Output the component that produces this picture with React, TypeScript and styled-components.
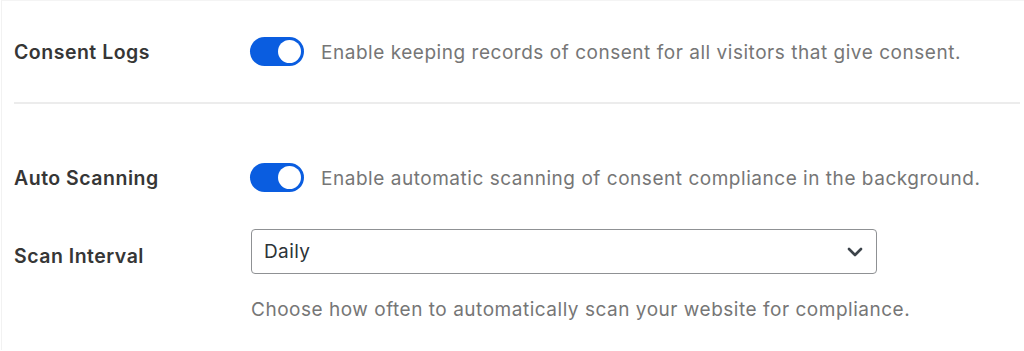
import React from "react";
import styled, { createGlobalStyle } from "styled-components";

const GlobalStyle = createGlobalStyle`
  html, body {
    margin: 0;
    padding: 0;
    background: #ffffff;
  }
  body {
    font-family: Inter, "Noto Sans", "Liberation Sans", sans-serif;
    -webkit-font-smoothing: antialiased;
  }
`;

const Card = styled.div`
  margin-left: 1px;
  border-left: 1px solid #f2f2f2;
  border-top: 1px solid #f4f4f4;
  background: #fff;
  height: 350px;
  box-sizing: border-box;
`;

const Section = styled.div<{ $top: number; $bottom: number }>`
  display: flex;
  flex-direction: column;
  padding: ${(p) => p.$top}px 4px ${(p) => p.$bottom}px 12px;
  gap: 37px;
`;

const Divider = styled.div`
  margin-left: 12px;
  margin-right: 4px;
  height: 2px;
  background: #ececec;
`;

const Row = styled.div`
  display: grid;
  grid-template-columns: 236px 1fr;
  align-items: center;
`;

const Label = styled.div<{ $shift?: number }>`
  font-size: 19.5px;
  font-weight: 600;
  color: #363636;
  letter-spacing: 0.5px;
  position: relative;
  top: ${(p) => p.$shift ?? 0}px;
`;

const ToggleLine = styled.div`
  display: flex;
  align-items: center;
  gap: 17px;
`;

const Switch = styled.div<{ $on: boolean }>`
  width: 54px;
  height: 29px;
  border-radius: 15px;
  background: ${(p) => (p.$on ? "#0a5de0" : "#c3c4c7")};
  display: flex;
  align-items: center;
  justify-content: ${(p) => (p.$on ? "flex-end" : "flex-start")};
  padding: 0 3px;
  box-sizing: border-box;
  flex-shrink: 0;
`;

const Knob = styled.div`
  width: 23px;
  height: 23px;
  border-radius: 50%;
  background: #fff;
`;

const Description = styled.span`
  font-size: 19px;
  color: #767676;
  letter-spacing: 0.53px;
  position: relative;
  top: 1px;
`;

const SelectBox = styled.div`
  width: 626px;
  height: 45px;
  margin-left: 1px;
  box-sizing: border-box;
  border: 1px solid #8f9194;
  border-radius: 4px;
  display: flex;
  align-items: center;
  justify-content: space-between;
  padding: 0 13px 0 12px;
  font-size: 19px;
  letter-spacing: 0.4px;
  color: #2c3338;
  cursor: pointer;
`;

const Help = styled.div`
  padding-left: 237px;
  margin-top: -13px;
  font-size: 19px;
  letter-spacing: 0.52px;
  color: #767676;
`;

function Toggle({ on }: { on: boolean }) {
  return (
    <Switch $on={on}>
      <Knob />
    </Switch>
  );
}

function Chevron() {
  return (
    <svg width="16" height="10" viewBox="0 0 16 10" fill="none">
      <path
        d="M2 2l6 6 6-6"
        stroke="#3c434a"
        strokeWidth="2.6"
        strokeLinecap="round"
        strokeLinejoin="round"
      />
    </svg>
  );
}

export default function App() {
  return (
    <>
      <GlobalStyle />
      <Card>
        <Section $top={36} $bottom={36}>
          <Row>
            <Label>Consent Logs</Label>
            <ToggleLine>
              <Toggle on />
              <Description>
                Enable keeping records of consent for all visitors that give consent.
              </Description>
            </ToggleLine>
          </Row>
        </Section>
        <Divider />
        <Section $top={59} $bottom={0}>
          <Row>
            <Label>Auto Scanning</Label>
            <ToggleLine>
              <Toggle on />
              <Description>
                Enable automatic scanning of consent compliance in the background.
              </Description>
            </ToggleLine>
          </Row>
          <Row>
            <Label $shift={4}>Scan Interval</Label>
            <SelectBox>
              <span>Daily</span>
              <Chevron />
            </SelectBox>
          </Row>
          <Help>Choose how often to automatically scan your website for compliance.</Help>
        </Section>
      </Card>
    </>
  );
}
